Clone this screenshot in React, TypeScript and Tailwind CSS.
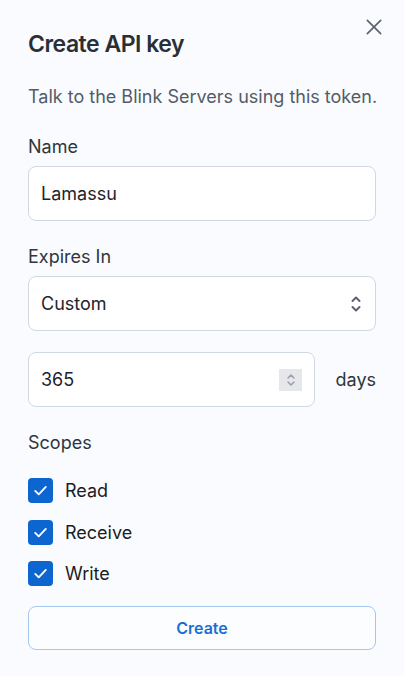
import React, { useState } from 'react';

const font = { fontFamily: 'Inter, "Noto Sans", sans-serif' };

// チェックボックス1行
const Scope = ({ label, checked, onToggle }: { label: string; checked: boolean; onToggle: () => void }) => (
  <label className="flex items-center gap-3 h-[25px] cursor-pointer">
    <span
      onClick={onToggle}
      className={
        'w-[25px] h-[25px] rounded-[4px] flex items-center justify-center ' +
        (checked ? 'bg-[#0d66d0]' : 'bg-white border border-[#cbd5e1]')
      }
    >
      {checked && (
        <svg width="17" height="17" viewBox="0 0 24 24" fill="none" stroke="white" strokeWidth="2.6" strokeLinecap="round" strokeLinejoin="round">
          <path d="M4.5 12.5l5 5L19.5 7" />
        </svg>
      )}
    </span>
    <span className="text-[18px] text-[#1a1d23]">{label}</span>
  </label>
);

const App: React.FC = () => {
  const [scopes, setScopes] = useState({ Read: true, Receive: true, Write: true });
  const toggle = (k: keyof typeof scopes) => setScopes((s) => ({ ...s, [k]: !s[k] }));

  return (
    <div className="w-[404px] h-[676px] bg-[#f9fbfe] relative" style={font}>
      <button className="absolute right-[20px] top-[17px] text-[#5b6270]">
        <svg width="20" height="20" viewBox="0 0 24 24" fill="none" stroke="currentColor" strokeWidth="2" strokeLinecap="round">
          <path d="M4 4l16 16M20 4L4 20" />
        </svg>
      </button>

      <div className="px-[28px] pt-[30px] flex flex-col">
        <h1 className="text-[23px] font-semibold tracking-[-0.5px] text-[#2a2e35] leading-[28px]">Create API key</h1>
        <p className="mt-[27px] text-[18px] text-[#545c68] leading-[24px] whitespace-nowrap">Talk to the Blink Servers using this token.</p>

        <div className="mt-[26px] text-[18px] text-[#30353d] leading-[24px]">Name</div>
        <div className="mt-[7px] h-[55px] rounded-[8px] border border-[#cfd8e3] bg-white flex items-center px-[12px] text-[18px] text-[#1f232a]">
          Lamassu
        </div>

        <div className="mt-[24px] text-[18px] text-[#30353d] leading-[24px]">Expires In</div>
        <div className="mt-[7px] h-[55px] rounded-[8px] border border-[#cfd8e3] bg-white flex items-center justify-between px-[12px] text-[18px] text-[#1f232a]">
          <span>Custom</span>
          <svg width="14" height="20" viewBox="0 0 14 20" fill="none" stroke="#5b6270" strokeWidth="2" strokeLinecap="round" strokeLinejoin="round">
            <path d="M3.5 7l3.5-3.5L10.5 7M3.5 13l3.5 3.5 3.5-3.5" />
          </svg>
        </div>

        <div className="mt-[21px] flex items-center">
          <div className="w-[287px] h-[55px] rounded-[8px] border border-[#cfd8e3] bg-white flex items-center justify-between pl-[12px] pr-[12px] text-[18px] text-[#1f232a]">
            <span>365</span>
            <span className="w-[23px] h-[22px] bg-[#e6e7eb] flex items-center justify-center">
              <svg width="12" height="18" viewBox="0 0 12 18" fill="none" stroke="#9aa0a8" strokeWidth="1.5" strokeLinecap="round" strokeLinejoin="round">
                <path d="M3 7l3-3 3 3M3 11l3 3 3-3" />
              </svg>
            </span>
          </div>
          <span className="ml-auto text-[18px] text-[#30353d]">days</span>
        </div>

        <div className="mt-[24px] text-[18px] text-[#30353d] leading-[24px]">Scopes</div>
        <div className="mt-[23px] flex flex-col gap-[16.5px]">
          {(Object.keys(scopes) as (keyof typeof scopes)[]).map((k) => (
            <Scope key={k} label={k} checked={scopes[k]} onToggle={() => toggle(k)} />
          ))}
        </div>

        <button className="mt-[20px] h-[44px] rounded-[8px] border border-[#a3c8f0] bg-[#fbfdff] text-[16px] font-semibold text-[#1a6fd4]">
          Create
        </button>
      </div>
    </div>
  );
};

export default App;
